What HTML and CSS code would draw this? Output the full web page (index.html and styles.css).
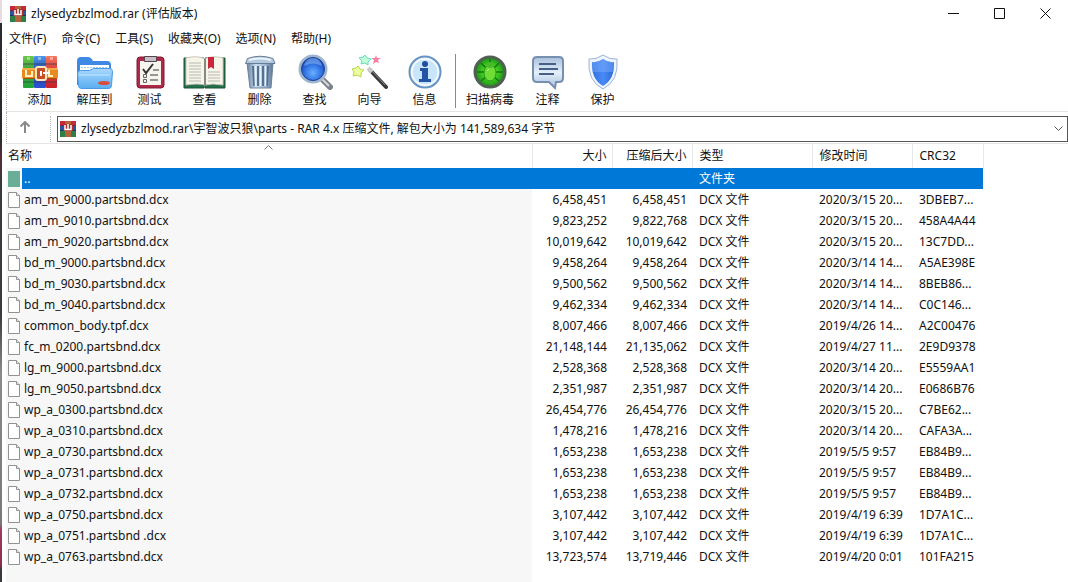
FILE: index.html
```
<!DOCTYPE html>
<html lang="zh-CN">
<head>
<meta charset="utf-8">
<title>zlysedyzbzlmod.rar (评估版本)</title>
<link rel="stylesheet" href="styles.css">
</head>
<body>
<svg class="defs" width="0" height="0" aria-hidden="true">
  <defs>
    <linearGradient id="gRed" x2="0" y2="1"><stop offset="0" stop-color="#f47a5e"/><stop offset=".4" stop-color="#e0403a"/><stop offset="1" stop-color="#c8202a"/></linearGradient>
    <linearGradient id="gGreen" x2="0" y2="1"><stop offset="0" stop-color="#6ac84a"/><stop offset=".4" stop-color="#3fa53c"/><stop offset="1" stop-color="#1fa53a"/></linearGradient>
    <linearGradient id="gBlue" x2="0" y2="1"><stop offset="0" stop-color="#4a9aea"/><stop offset=".4" stop-color="#2b55b8"/><stop offset="1" stop-color="#2a50d0"/></linearGradient>
    <linearGradient id="gFolder" x2="0" y2="1"><stop offset="0" stop-color="#a8d8ff"/><stop offset="1" stop-color="#5aaef0"/></linearGradient>
    <linearGradient id="gMetal"><stop offset="0" stop-color="#6b84a2"/><stop offset=".35" stop-color="#c9dcf0"/><stop offset=".7" stop-color="#9fb8d4"/><stop offset="1" stop-color="#5d7696"/></linearGradient>
    <radialGradient id="gLens" cy=".65"><stop offset="0" stop-color="#69b0ff"/><stop offset=".6" stop-color="#3477e6"/><stop offset="1" stop-color="#1c4fc0"/></radialGradient>
    <radialGradient id="gVirus"><stop offset="0" stop-color="#7df03a"/><stop offset=".6" stop-color="#35c41c"/><stop offset="1" stop-color="#1d8a1c"/></radialGradient>
    <linearGradient id="gNote" x2="0" y2="1"><stop offset="0" stop-color="#a9bfdc"/><stop offset=".5" stop-color="#e3effb"/><stop offset="1" stop-color="#a9c0dc"/></linearGradient>
    <linearGradient id="gShield"><stop offset="0" stop-color="#2d6fe0"/><stop offset=".5" stop-color="#4a8af5"/><stop offset="1" stop-color="#2c68dc"/></linearGradient>
    <symbol id="rar" viewBox="0 0 16 16">
      <path fill="#c22a35" d="M0 0h16v5H0z"/><path fill="#2c55a0" d="M0 5h16v5H0z"/><path fill="#2c8045" d="M0 10h16v6H0z"/>
      <path fill="#7a2530" d="M0 4h16v1H0z"/><path fill="#1d335f" d="M0 9h16v1H0z"/>
      <path fill="#b5623a" d="M5 0h6v16H5z"/><path fill="#a3322c" d="M3 3h10v7H3z"/>
      <path fill="none" stroke="#fff" stroke-width="1.5" d="M5 4v4.500h6V4M8 3v5"/>
    </symbol>
    <symbol id="doc" viewBox="0 0 12 16"><path fill="#fff" stroke="#929292" d="M.5.5h8l3 3v12H.5z"/><path fill="#e8e8e8" stroke="#929292" d="M8.500.5v3h3"/></symbol>
  </defs>
</svg>
<div class="app">
  <header class="titlebar">
    <svg class="logo"><use href="#rar"/></svg>
    <h1 class="title">zlysedyzbzlmod.rar (评估版本)</h1>
    <div class="window-buttons">
      <button aria-label="最小化"><svg width="11" height="11"><path d="M0 5.500h11"/></svg></button>
      <button aria-label="最大化"><svg width="11" height="11"><path d="M.5.5h10v10H.5z"/></svg></button>
      <button aria-label="关闭"><svg width="11" height="11"><path d="M.5.5l10 10M10.500.5l-10 10"/></svg></button>
    </div>
  </header>
  <nav class="menu">
    <button>文件(F)</button><button>命令(C)</button><button>工具(S)</button><button>收藏夹(O)</button><button>选项(N)</button><button>帮助(H)</button>
  </nav>
  <div class="toolbar">
    <button><svg viewBox="0 0 36 36">
      <rect x="1" y="2" width="11" height="32" rx="1" fill="url(#gGreen)"/><rect x="12" y="2" width="12" height="32" rx="1" fill="url(#gBlue)"/><rect x="24" y="2" width="11" height="32" rx="1" fill="url(#gRed)"/>
      <path fill="#fff" opacity=".4" d="M5 3h3v3H5zM16 3h3v3h-3zM28 3h3v3h-3z"/><path fill="#2f3350" opacity=".35" d="M1 9h11v2H1zM12 9h12v2H12zM24 9h11v2H24zM1 27h11v2H1zM12 27h12v2H12zM24 27h11v2H24z"/>
      <rect y="14" width="36" height="11" rx="2" fill="#e98a20"/><path stroke="#ffd070" d="M1 15h34"/><path stroke="#a4500f" d="M1 24.500h34"/>
      <path fill="none" stroke="#fff0c0" stroke-width="2" d="M4 16v6h5M10 17v6M27 16v6h4"/><rect x="14" y="13" width="10" height="13" rx="2" fill="#c74c27" stroke="#ffe6bd" stroke-width="2"/><path stroke="#fff" stroke-width="2" d="M19 17v5M21 19h7"/>
    </svg><span>添加</span></button>
    <button><svg viewBox="0 0 36 36">
      <path fill="#3f88e6" d="M0 7q0-4 4-4h7q3 0 5 4h14q4 0 4 4v20H0z"/><path fill="#fff" d="M3 11h29v8H3z"/><path stroke="#9cc8ee" stroke-dasharray="2 1" d="M4 13.500h27"/>
      <path fill="url(#gFolder)" stroke="#4a98e8" d="M.5 19.500q0-3 3-3h9l4-2h16q3 0 3 3l-1 14q0 3-3 3h-27q-3 0-3-3z"/><path stroke="#fff" opacity=".5" d="M2 21h31"/><ellipse cx="27" cy="29" rx="6" ry="2" fill="#db4a3b"/>
    </svg><span>解压到</span></button>
    <button><svg viewBox="0 0 36 36">
      <rect x="5" y="3" width="27" height="31" rx="3" fill="#ae2848" stroke="#7e1c35"/><rect x="8" y="7" width="21" height="24" fill="#f6f4ee"/><path fill="#c7bfc6" stroke="#59434d" d="M12.500 2.500h12v5h-12z"/>
      <path fill="none" stroke="#333" stroke-width="2" d="M11 15l3 4 7-9"/><path stroke="#777" stroke-width="1.500" d="M21 16h6M18 21h8M18 26h8"/><path fill="none" stroke="#666" d="M11.500 20.500h3v3h-3zM11.500 25.500h3v3h-3z"/>
    </svg><span>测试</span></button>
    <button><svg class="book" viewBox="0 0 44 36">
      <path fill="#247149" stroke="#185338" d="M1 4h20v30H1z"/><path fill="#247149" stroke="#185338" d="M22 4h20v30H22z"/>
      <path fill="#f7f5ea" stroke="#c8c8bb" d="M3 4q12-3 19 1v26q-7-2-19 0zM22 5q7-4 18-1v27q-11-2-18 0z"/><path stroke="#b5b8b0" d="M6 9h12M6 12h12M6 15h12M6 18h12M6 21h12M6 24h12M6 27h12M25 18h12M25 21h12M25 24h12M25 27h12"/><path stroke="#878a83" stroke-width="2" d="M22 5v27"/><path fill="#ca273b" d="M25 3h6v12l-3-2-3 2z"/>
    </svg><span>查看</span></button>
    <button><svg viewBox="0 0 36 36">
      <path fill="url(#gMetal)" stroke="#6c829c" d="M5 9h26l-2 25H8z"/><path fill="none" stroke="#56708f" stroke-width="2" d="M11 12l1 20M16 12v20M21 12v20M26 12l-1 20"/><path stroke="#e7f1fb" stroke-width="1.500" d="M13.500 12v20M18.500 12v20M23.500 12v20"/><path fill="#b4c8de" stroke="#667d98" d="M3.500 9.500l2-5Q18 0 31 4.500l2 5z"/><path fill="none" stroke="#edf5ff" stroke-width="2" d="M7 6q10-3 22 0"/>
    </svg><span>删除</span></button>
    <button><svg viewBox="0 0 36 36">
      <path stroke="#7c8288" stroke-width="6" stroke-linecap="round" d="M26 26l7 7"/><path stroke="#d6d9dc" stroke-width="2" d="M25 25l7 7"/><circle cx="16" cy="15" r="13" fill="url(#gLens)" stroke="#a0b6cf" stroke-width="3"/><circle cx="16" cy="15" r="11.500" fill="none" stroke="#1d4194"/><path fill="#a1d0ff" opacity=".45" d="M7 12q2-8 9-8t9 8q-9-5-18 0z"/>
    </svg><span>查找</span></button>
    <button><svg viewBox="0 0 36 36">
      <path stroke="#38383c" stroke-width="4" stroke-linecap="round" d="M18 16l16 17"/><path stroke="#c9c9cc" stroke-width="4" d="M16 14l4 4"/><path stroke="#898991" d="M20 17l13 14"/>
      <path fill="#bfffd3" stroke="#62dbc5" d="M13 1l2 3 4 1-3 3v3l-3-2-4 1 1-3-3-3 4-1z"/><path fill="#edff9e" stroke="#b4d84a" d="M6 12l2 3 4 1-3 3v4l-4-2-4 1 1-4-2-3 4-1z"/><path fill="#f782a3" d="M24 1l1 3h4l-3 2 1 3-3-1-3 2 1-4-3-2h4z"/>
    </svg><span>向导</span></button>
    <button><svg viewBox="0 0 36 36">
      <circle cx="18" cy="18" r="15.500" fill="#e9f4fd" stroke="#6793c4" stroke-width="2"/><circle cx="18" cy="18" r="13" fill="#c9e5fa" stroke="#fff"/><circle cx="18" cy="10" r="3" fill="#1e4f9e"/><path fill="#2455a5" d="M13 14h8v11h3v3H12v-3h3v-8h-2z"/>
    </svg><span>信息</span></button>
    <button class="group-start"><svg viewBox="0 0 36 36">
      <circle cx="18" cy="18" r="15" fill="url(#gVirus)" stroke="#506051" stroke-width="3"/><path fill="none" stroke="#167514" stroke-width="1.500" d="M18 5v6M5 18h7M24 18h7M9 9l5 5M27 9l-5 5M9 27l5-4M27 27l-5-4"/><ellipse cx="18" cy="19" rx="6" ry="8" fill="#6ede37" stroke="#299a1d"/><circle cx="18" cy="11" r="3" fill="#4bb92a"/><path stroke="#d6ffac" d="M15 17l2-2"/>
    </svg><span>扫描病毒</span></button>
    <button><svg viewBox="0 0 36 36">
      <path fill="url(#gNote)" stroke="#7890b0" stroke-width="2" d="M7 3h22q4 0 4 4v17q0 4-4 4h-3l-1 6-6-6H7q-4 0-4-4V7q0-4 4-4z"/><path stroke="#466087" stroke-width="2" d="M9 10h17M9 15h19M9 20h15"/>
    </svg><span>注释</span></button>
    <button><svg viewBox="0 0 36 36">
      <path fill="#edf4fb" stroke="#9bb4d4" d="M18 1q7 5 14 4 2 22-14 30Q2 27 4 5q7 1 14-4z"/><path fill="url(#gShield)" d="M18 5q6 4 11 3 1 17-11 24Q6 25 7 8q5 1 11-3z"/><path fill="#88b7ff" opacity=".4" d="M18 5q6 4 11 3v10H7V8q5 1 11-3z"/>
    </svg><span>保护</span></button>
  </div>
  <div class="location">
    <button class="up" aria-label="向上"><svg width="12" height="12"><path d="M6 12V1M1.500 5.500L6 1l4.500 4.500"/></svg></button>
    <button class="address"><svg class="logo"><use href="#rar"/></svg><span>zlysedyzbzlmod.rar\宇智波只狼\parts - RAR 4.x 压缩文件, 解包大小为 141,589,634 字节</span><svg class="chevron" width="9" height="6"><path d="M.5.5l4 4 4-4"/></svg></button>
  </div>
  <main class="list">
    <table>
      <colgroup><col class="c-name"><col class="c-size"><col class="c-size"><col class="c-type"><col class="c-date"><col class="c-crc"></colgroup>
      <thead><tr><th class="sorted">名称<svg class="sort" width="9" height="5"><path d="M.5 4.500l4-4 4 4"/></svg></th><th class="num">大小</th><th class="num">压缩后大小</th><th>类型</th><th>修改时间</th><th>CRC32</th></tr></thead>
      <tbody id="rows"><tr class="selected"><td><span class="file"><i class="folder"></i><span>..</span></span></td><td></td><td></td><td>文件夹</td><td></td><td></td></tr></tbody>
    </table>
  </main>
</div>
<script src="files.js"></script>
</body>
</html>
```
FILE: styles.css
```
* { box-sizing: border-box; }
body { margin: 0; background: #fff; color: #111; font: 12px/20px "Noto Sans", "Noto Sans CJK SC", sans-serif; }
button { margin: 0; padding: 0; border: 0; background: none; color: inherit; font: inherit; }
svg { display: block; flex: none; fill: none; }
.defs { position: absolute; }
.app { display: flex; flex-direction: column; min-height: 100vh; padding-left: 6px; background: linear-gradient(#e6dce0 4%, #2b2a30 4%, #2b2a30 24%, #5a2a3a 27%, #3a383e 31%, #3a383e 54%, #8a8a8e 64%, #77777c 90%, #a03a62 91%, #8a2c50 97%, #3a383e 98%) 0 0 / 2px 100% no-repeat; }
.logo { width: 16px; height: 16px; }
.titlebar { display: flex; align-items: center; gap: 5px; height: 27px; padding-left: 4px; }
.title { flex: 1; margin: 0; font-size: 12px; font-weight: 400; }
.window-buttons { display: flex; }
.window-buttons button { display: flex; align-items: center; justify-content: center; width: 46px; height: 27px; }
.window-buttons svg { stroke: #111; }
.menu { display: flex; gap: 15px; height: 22px; padding: 1px 0 0 3px; }
.toolbar { display: flex; height: 63px; padding: 5px 0 3px 5px; border-left: 1px dotted #aaa; border-bottom: 1px solid #e4e4e4; }
.toolbar button { display: flex; flex-direction: column; align-items: center; width: 55px; }
.toolbar svg { width: 36px; height: 36px; }
.toolbar .book { width: 44px; }
.toolbar span { line-height: 20px; white-space: nowrap; }
.toolbar .group-start { width: 65px; margin-left: 3px; padding-left: 4px; border-left: 1px solid #8a8a8a; }
.location { display: flex; height: 32px; padding: 4px 0 1px; border-left: 1px dotted #aaa; border-bottom: 1px solid #e4e4e4; }
.up { display: flex; justify-content: center; width: 44px; margin-right: 6px; padding-top: 5px; border-right: 1px dotted #bbb; }
.up svg { margin-right: 8px; stroke: #888; stroke-width: 2; }
.address { flex: 1; display: flex; align-items: center; gap: 5px; padding: 0 4px 0 2px; border: 1px solid #555; text-align: left; }
.address span { flex: 1; }
.chevron { stroke: #555; }
.list { flex: 1; display: flex; background: linear-gradient(90deg, #f7f7f7 526px, #fff 526px); }
table { width: 977px; table-layout: fixed; border-collapse: collapse; align-self: flex-start; }
thead { background: #fff; }
.c-name { width: 526px; } .c-size { width: 80px; } .c-type { width: 120px; } .c-date { width: 100px; } .c-crc { width: 71px; }
th { height: 24px; padding: 0 5px 1px 7px; border-right: 1px solid #e8e8e8; font-weight: 400; text-align: left; }
th.sorted { position: relative; padding-left: 2px; }
.sort { position: absolute; top: 1px; left: calc(50% - 5px); stroke: #777; }
td { height: 21px; padding: 0 0 0 7px; overflow: hidden; white-space: nowrap; text-overflow: ellipsis; }
td:first-child { padding: 0 0 0 2px; }
th.num, td.num { padding-left: 0; padding-right: 5px; text-align: right; }
.file { display: flex; align-items: center; gap: 4px; }
.file svg { width: 12px; height: 16px; }
.folder { width: 12px; height: 16px; background: #6bae97; }
.selected { background: #0078d7; color: #fff; }
.selected td:first-child { background: linear-gradient(90deg, #f7f7f7 16px, #0078d7 16px); }
```
FILE: files.js
```
const files = [
  ["am_m_9000.partsbnd.dcx", "6,458,451", "6,458,451", "2020/3/15 20...", "3DBEB7..."],
  ["am_m_9010.partsbnd.dcx", "9,823,252", "9,822,768", "2020/3/15 20...", "458A4A44"],
  ["am_m_9020.partsbnd.dcx", "10,019,642", "10,019,642", "2020/3/15 20...", "13C7DD..."],
  ["bd_m_9000.partsbnd.dcx", "9,458,264", "9,458,264", "2020/3/14 14...", "A5AE398E"],
  ["bd_m_9030.partsbnd.dcx", "9,500,562", "9,500,562", "2020/3/14 14...", "8BEB86..."],
  ["bd_m_9040.partsbnd.dcx", "9,462,334", "9,462,334", "2020/3/14 14...", "C0C146..."],
  ["common_body.tpf.dcx", "8,007,466", "8,007,466", "2019/4/26 14...", "A2C00476"],
  ["fc_m_0200.partsbnd.dcx", "21,148,144", "21,135,062", "2019/4/27 11...", "2E9D9378"],
  ["lg_m_9000.partsbnd.dcx", "2,528,368", "2,528,368", "2020/3/14 20...", "E5559AA1"],
  ["lg_m_9050.partsbnd.dcx", "2,351,987", "2,351,987", "2020/3/14 20...", "E0686B76"],
  ["wp_a_0300.partsbnd.dcx", "26,454,776", "26,454,776", "2020/3/15 20...", "C7BE62..."],
  ["wp_a_0310.partsbnd.dcx", "1,478,216", "1,478,216", "2020/3/14 20...", "CAFA3A..."],
  ["wp_a_0730.partsbnd.dcx", "1,653,238", "1,653,238", "2019/5/5 9:57", "EB84B9..."],
  ["wp_a_0731.partsbnd.dcx", "1,653,238", "1,653,238", "2019/5/5 9:57", "EB84B9..."],
  ["wp_a_0732.partsbnd.dcx", "1,653,238", "1,653,238", "2019/5/5 9:57", "EB84B9..."],
  ["wp_a_0750.partsbnd.dcx", "3,107,442", "3,107,442", "2019/4/19 6:39", "1D7A1C..."],
  ["wp_a_0751.partsbnd .dcx", "3,107,442", "3,107,442", "2019/4/19 6:39", "1D7A1C..."],
  ["wp_a_0763.partsbnd.dcx", "13,723,574", "13,719,446", "2019/4/20 0:01", "101FA215"]
];
document.getElementById("rows").insertAdjacentHTML("beforeend", files.map(([name, size, packed, date, crc]) =>
  `<tr><td><span class="file"><svg><use href="#doc"/></svg><span>${name}</span></span></td><td class="num">${size}</td><td class="num">${packed}</td><td>DCX 文件</td><td>${date}</td><td>${crc}</td></tr>`).join(""));
```
